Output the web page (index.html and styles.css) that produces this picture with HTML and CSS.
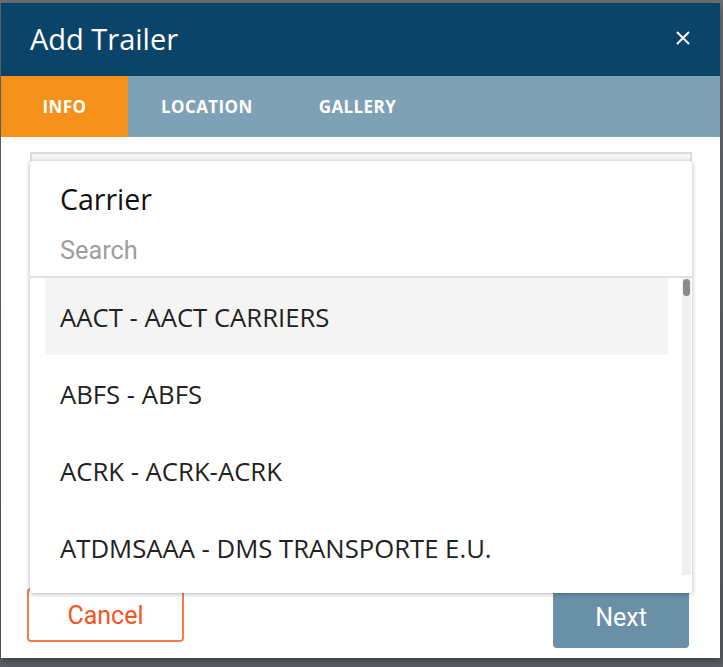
FILE: index.html
```
<!DOCTYPE html>
<html>
<head>
<meta charset="utf-8">
<link rel="stylesheet" href="styles.css">
</head>
<body>
<div class="modal">
  <header class="modal-head">
    <h1 class="modal-title">Add Trailer</h1>
    <button class="close" aria-label="Close">
      <svg width="14" height="14" viewBox="0 0 14 14"><path d="M1 1L13 13M13 1L1 13" stroke="#fff" stroke-width="2" fill="none"/></svg>
    </button>
  </header>
  <nav class="tabs">
    <span class="tab active">INFO</span>
    <span class="tab">LOCATION</span>
    <span class="tab">GALLERY</span>
  </nav>
  <div class="modal-body">
    <div class="field"></div>
    <div class="actions">
      <button class="btn btn-cancel">Cancel</button>
      <button class="btn btn-next">Next</button>
    </div>
    <div class="dropdown">
      <div class="dd-head">
        <div class="dd-label">Carrier</div>
        <div class="dd-search">Search</div>
      </div>
      <div class="dd-list-wrap">
        <ul class="dd-list">
          <li class="dd-item hover">AACT - AACT CARRIERS</li>
          <li class="dd-item">ABFS - ABFS</li>
          <li class="dd-item">ACRK - ACRK-ACRK</li>
          <li class="dd-item">ATDMSAAA - DMS TRANSPORTE E.U.</li>
        </ul>
        <div class="scroll-track"><div class="scroll-thumb"></div></div>
      </div>
    </div>
  </div>
</div>
</body>
</html>
```

FILE: styles.css
```
* { box-sizing: border-box; }
html, body { margin: 0; padding: 0; }
body {
  background: linear-gradient(#6c6f74, #5c5f64);
  height: 667px;
  overflow: hidden;
  font-family: "Open Sans", sans-serif;
}
.modal {
  margin: 3px 3px 0 1px;
  height: 655px;
  background: #fff;
  display: flex;
  flex-direction: column;
  box-shadow: 0 3px 8px rgba(0,0,0,0.35);
}
.modal-head {
  height: 73px;
  background: #0a4569;
  display: flex;
  align-items: center;
  justify-content: space-between;
  padding: 0 30px 3px 29px;
}
.modal-title {
  margin: 0;
  font-family: "Open Sans", sans-serif;
  font-weight: 400;
  font-size: 29px;
  color: #fff;
  line-height: 1;
}
.close {
  background: none;
  border: 0;
  padding: 0;
  width: 14px;
  height: 14px;
  display: flex;
  cursor: pointer;
}
.tabs {
  height: 61px;
  background: #7fa1b5;
  display: flex;
}
.tab {
  min-width: 127px;
  padding: 0 33px;
  display: flex;
  align-items: center;
  justify-content: center;
  color: #fff;
  font-family: "Open Sans", sans-serif;
  font-weight: 700;
  font-size: 17px;
  letter-spacing: 0.4px;
}
.tab.active { background: #f5901a; }
.modal-body {
  position: relative;
  flex: 1;
  display: flex;
  flex-direction: column;
  padding: 15px 0 10px 0;
}
.field {
  margin: 0 28px 0 29px;
  height: 52px;
  border: 2px solid #dcdcdc;
  background: #f6f6f6;
}
.actions {
  margin-top: auto;
  display: flex;
  justify-content: space-between;
  align-items: flex-end;
  padding: 0 31px 0 26px;
}
.btn {
  font-family: Roboto, sans-serif;
  font-size: 25px;
  border-radius: 4px;
  cursor: pointer;
}
.btn-cancel {
  width: 157px;
  height: 54px;
  margin-bottom: 6px;
  background: #fff;
  border: 2px solid #f87a4c;
  color: #f5561f;
}
.btn-next {
  width: 136px;
  height: 62px;
  background: #6a90a8;
  border: 0;
  color: #fff;
}
.dropdown {
  position: absolute;
  left: 29px;
  top: 24px;
  width: 662px;
  height: 432px;
  background: #fff;
  border-radius: 2px;
  box-shadow: 0 1px 5px rgba(0,0,0,0.3);
  display: flex;
  flex-direction: column;
}
.dd-head {
  padding: 19px 30px 9px 30px;
  border-bottom: 2px solid #e2e2e2;
}
.dd-label {
  font-family: "Open Sans", sans-serif;
  font-size: 28.5px;
  line-height: 38px;
  color: #111;
}
.dd-search {
  margin-top: 16px;
  font-family: Roboto, sans-serif;
  font-size: 25.3px;
  line-height: 33px;
  color: #9e9e9e;
}
.dd-list-wrap {
  height: 297px;
  display: flex;
}
.dd-list {
  flex: 1;
  list-style: none;
  margin: 0;
  padding: 0 14px 0 15px;
  overflow: hidden;
}
.dd-item {
  height: 77px;
  line-height: 80px;
  padding-left: 15px;
  font-family: "Open Sans", sans-serif;
  font-size: 25.7px;
  color: #222;
  white-space: nowrap;
}
.dd-item.hover { background: #f4f4f4; }
.scroll-track {
  width: 9px;
  margin-right: 1px;
  background: #f0f0f0;
  display: flex;
  justify-content: center;
  padding-top: 1px;
}
.scroll-thumb {
  width: 7px;
  height: 17px;
  border-radius: 4px;
  background: #8a8a8a;
}
```
